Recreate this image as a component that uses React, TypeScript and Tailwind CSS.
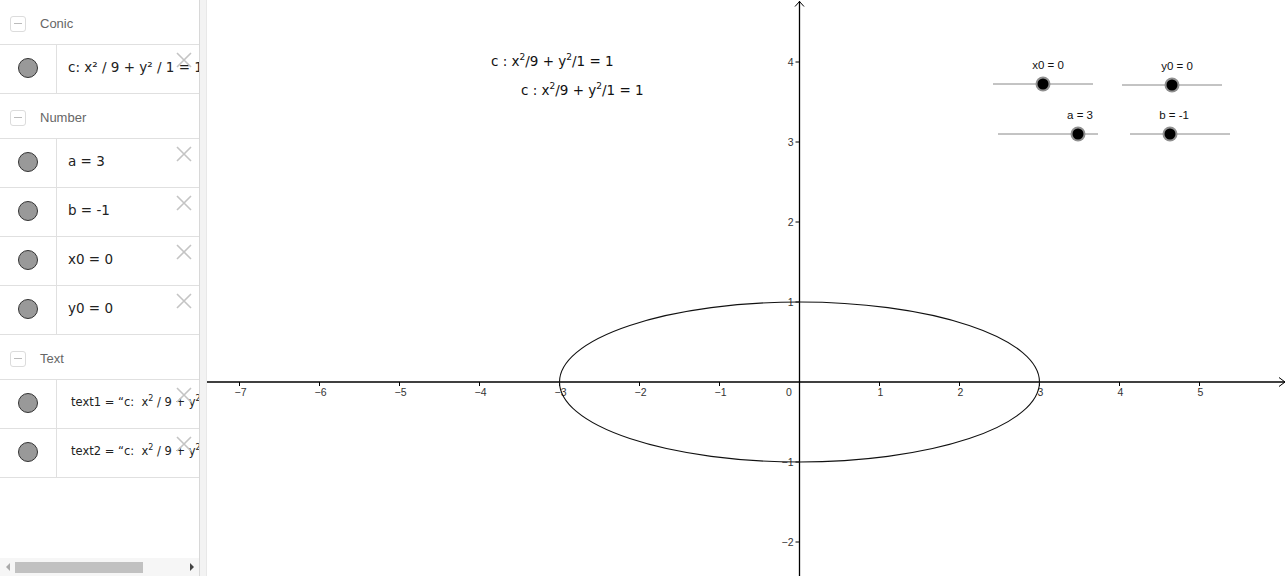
import type { ReactNode } from "react";

// GeoGebra-style algebra view + graphics view

type Row = { content: ReactNode; small?: boolean };
type Section = { title: string; rows: Row[] };

const SECTIONS: Section[] = [
  {
    title: "Conic",
    rows: [{ content: <>c: x² / 9 + y² / 1 = 1</> }],
  },
  {
    title: "Number",
    rows: [
      { content: <>a = 3</> },
      { content: <>b = -1</> },
      { content: <>x0 = 0</> },
      { content: <>y0 = 0</> },
    ],
  },
  {
    title: "Text",
    rows: [
      {
        small: true,
        content: (
          <>
            text1 = “c:&nbsp; x<sup className="text-[8px]">2</sup>&nbsp;/ 9 + y<sup className="text-[8px]">2</sup>
          </>
        ),
      },
      {
        small: true,
        content: (
          <>
            text2 = “c:&nbsp; x<sup className="text-[8px]">2</sup>&nbsp;/ 9 + y<sup className="text-[8px]">2</sup>
          </>
        ),
      },
    ],
  },
];

const SANS = "font-['Liberation_Sans',Arial,sans-serif]";

function CloseX() {
  return (
    <svg width="18" height="18" viewBox="0 0 18 18" className="absolute right-[6px] top-[6px]">
      <path d="M2 2 L16 16 M16 2 L2 16" stroke="#c4c4c4" strokeWidth="1.6" fill="none" />
    </svg>
  );
}

function SectionHeader({ title }: { title: string }) {
  return (
    <div className="flex h-[45px] shrink-0 items-center border-b border-[#e0e0e0] pl-[10px] pt-[3px]">
      <div className="flex h-[16px] w-[16px] items-center justify-center rounded-[3px] border border-[#dcdcdc]">
        <div className="h-[1px] w-[8px] bg-[#bbbbbb]" />
      </div>
      <span className={`ml-[14px] text-[13px] text-[#666] ${SANS}`}>{title}</span>
    </div>
  );
}

function ItemRow({ row }: { row: Row }) {
  return (
    <div className="relative flex h-[49px] shrink-0 border-b border-[#e0e0e0]">
      <div className="flex w-[57px] shrink-0 items-center justify-center border-r border-[#e0e0e0] pb-[3px]">
        <div className="h-[20px] w-[20px] rounded-full border border-[#333] bg-[#999]" />
      </div>
      <div
        className={`flex min-w-0 flex-1 items-center overflow-hidden whitespace-nowrap pb-[3px] text-[#222] font-['DejaVu_Sans',sans-serif] ${
          row.small ? "pl-[14px] text-[11.5px]" : "pl-[11px] text-[13.5px]"
        }`}
      >
        {row.content}
      </div>
      <CloseX />
    </div>
  );
}

function Scrollbar() {
  return (
    <div className="flex h-[18px] shrink-0 items-center bg-[#f6f6f6]">
      <div className="flex w-[15px] justify-center">
        <div className="h-0 w-0 border-y-[4px] border-r-[4px] border-y-transparent border-r-[#aaa]" />
      </div>
      <div className="h-[11px] w-[128px] bg-[#c1c1c1]" />
      <div className="flex-1" />
      <div className="flex w-[15px] justify-center">
        <div className="h-0 w-0 border-y-[4px] border-l-[4px] border-y-transparent border-l-[#444]" />
      </div>
    </div>
  );
}

function AlgebraView() {
  return (
    <div className="flex h-full w-[200px] shrink-0 flex-col border-r border-[#d8d8d8] bg-white">
      <div className="flex flex-1 flex-col overflow-hidden">
        {SECTIONS.map((s) => (
          <div key={s.title} className="flex flex-col">
            <SectionHeader title={s.title} />
            {s.rows.map((r, i) => (
              <ItemRow key={i} row={r} />
            ))}
          </div>
        ))}
      </div>
      <Scrollbar />
    </div>
  );
}

// origin and scale in page pixels
const OX = 799.5;
const OY = 382;
const U = 80;

const SLIDERS = [
  { label: "x0 = 0", lx: 1048, ly: 69, x1: 993, x2: 1093, y: 84, px: 1043 },
  { label: "y0 = 0", lx: 1177, ly: 70, x1: 1122, x2: 1222, y: 85, px: 1172 },
  { label: "a = 3", lx: 1080, ly: 119, x1: 998, x2: 1098, y: 134, px: 1078 },
  { label: "b = -1", lx: 1174, ly: 119, x1: 1130, x2: 1230, y: 134, px: 1170 },
];

function Formula({ x, y }: { x: number; y: number }) {
  return (
    <text x={x} y={y} fontSize="13.5" fill="#111" fontFamily="'DejaVu Sans', sans-serif">
      c : x
      <tspan dy="-6" fontSize="9">2</tspan>
      <tspan dy="6">/9 + y</tspan>
      <tspan dy="-6" fontSize="9">2</tspan>
      <tspan dy="6">/1 = 1</tspan>
    </text>
  );
}

function GraphicsView() {
  const xs = [-7, -6, -5, -4, -3, -2, -1, 1, 2, 3, 4, 5];
  const ys = [4, 3, 2, 1, -1, -2];
  const fmt = (n: number) => (n < 0 ? `\u2212${-n}` : `${n}`);
  return (
    <div className="h-full flex-1 bg-white">
      <svg width="1081" height="576" viewBox="207 0 1081 576" className="block">
        {/* axes */}
        <line x1="207" y1={OY} x2="1285" y2={OY} stroke="#000" strokeWidth="1.3" />
        <path d="M1279 377.5 L1285 382 L1279 386.5" stroke="#000" strokeWidth="1" fill="none" />
        <line x1={OX} y1="1" x2={OX} y2="576" stroke="#000" strokeWidth="1.3" />
        <path d="M795 6.5 L799.5 1.5 L804 6.5" stroke="#000" strokeWidth="1" fill="none" />

        <g fontFamily="'Liberation Sans', Arial, sans-serif" fontSize="10.5" fill="#333">
          {xs.map((n) => (
            <g key={`x${n}`}>
              <line x1={OX + n * U} y1={OY} x2={OX + n * U} y2={OY + 4} stroke="#000" strokeWidth="1" />
              <text x={OX + n * U + 1} y={OY + 14} textAnchor="middle">
                {fmt(n)}
              </text>
            </g>
          ))}
          <text x="789" y={OY + 14} textAnchor="middle">
            0
          </text>
          {ys.map((n) => (
            <g key={`y${n}`}>
              <line x1={OX - 4} y1={OY - n * U} x2={OX} y2={OY - n * U} stroke="#000" strokeWidth="1" />
              <text x={OX - 6} y={OY - n * U + 4} textAnchor="end">
                {fmt(n)}
              </text>
            </g>
          ))}
        </g>

        {/* conic c */}
        <ellipse cx={OX} cy={OY} rx={3 * U} ry={U} stroke="#111" strokeWidth="1.1" fill="none" />

        {/* texts */}
        <Formula x={491} y={66} />
        <Formula x={521} y={95} />

        {/* sliders */}
        <g fontFamily="'Liberation Sans', Arial, sans-serif" fontSize="11.5" fill="#111">
          {SLIDERS.map((s) => (
            <g key={s.label}>
              <text x={s.lx} y={s.ly} textAnchor="middle">
                {s.label}
              </text>
              <line x1={s.x1} y1={s.y} x2={s.x2} y2={s.y} stroke="#888" strokeWidth="1" />
              <circle cx={s.px} cy={s.y} r="7.5" fill="#909090" />
              <circle cx={s.px} cy={s.y} r="5.5" fill="#000" />
            </g>
          ))}
        </g>
      </svg>
    </div>
  );
}

export default function App() {
  return (
    <div className="flex h-[576px] w-[1288px] overflow-hidden bg-white">
      <AlgebraView />
      <div className="h-full w-[7px] shrink-0 border-r border-[#e8e8e8] bg-[#f3f3f3]" />
      <GraphicsView />
    </div>
  );
}
